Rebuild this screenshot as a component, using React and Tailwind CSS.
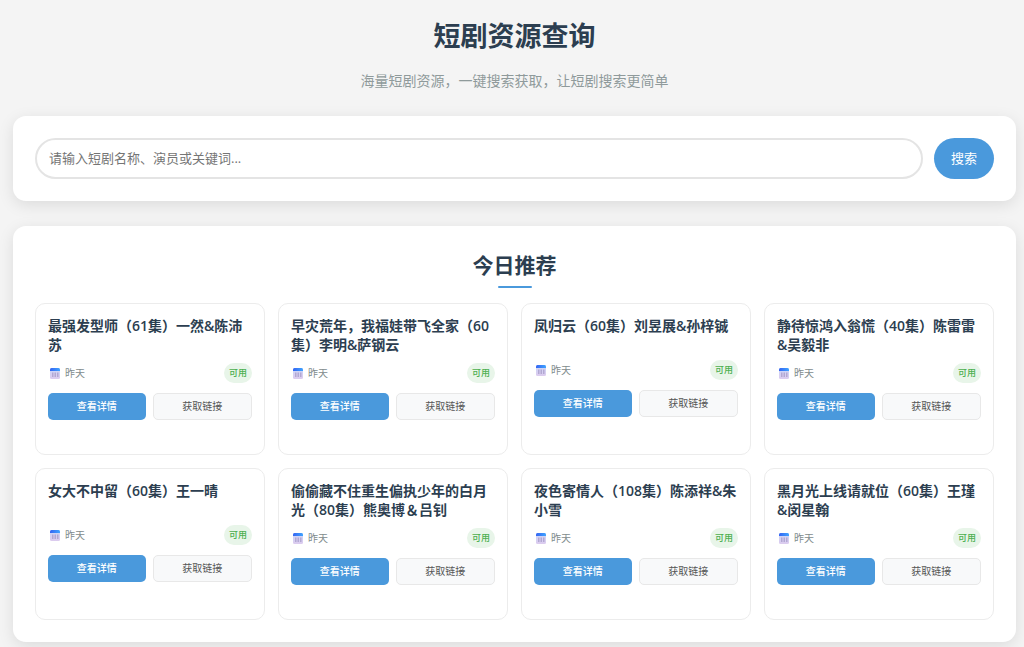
import { useState } from 'react';

const dramas = [
  { id: 1, title: '最强发型师（61集）一然&陈沛苏', date: '昨天', status: '可用' },
  { id: 2, title: '早灾荒年，我福娃带飞全家（60集）李明&萨钢云', date: '昨天', status: '可用' },
  { id: 3, title: '凤归云（60集）刘昱展&孙梓铖', date: '昨天', status: '可用' },
  { id: 4, title: '静待惊鸿入翁慌（40集）陈雷雷&吴毅非', date: '昨天', status: '可用' },
  { id: 5, title: '女大不中留（60集）王一晴', date: '昨天', status: '可用' },
  { id: 6, title: '偷偷藏不住重生偏执少年的白月光（80集）熊奥博＆吕钊', date: '昨天', status: '可用' },
  { id: 7, title: '夜色寄情人（108集）陈添祥&朱小雪', date: '昨天', status: '可用' },
  { id: 8, title: '黑月光上线请就位（60集）王瑾&闵星翰', date: '昨天', status: '可用' },
];

function CalendarIcon() {
  return (
    <svg width="10" height="11" viewBox="0 0 20 22" aria-hidden="true">
      <defs>
        <linearGradient id="calendarTop" x1="0" y1="0" x2="1" y2="0">
          <stop offset="0" stopColor="#3564f2" />
          <stop offset="1" stopColor="#3fa4ff" />
        </linearGradient>
        <linearGradient id="calendarBody" x1="0" y1="0" x2="0" y2="1">
          <stop offset="0" stopColor="#c9d6f8" />
          <stop offset="1" stopColor="#dccbee" />
        </linearGradient>
      </defs>
      <rect x="0" y="0" width="20" height="22" rx="3" fill="url(#calendarBody)" />
      <path d="M3 0h14a3 3 0 0 1 3 3v3H0V3a3 3 0 0 1 3-3z" fill="url(#calendarTop)" />
      <g fill="#b3a8d2">
        <rect x="4" y="9" width="3" height="9" />
        <rect x="9" y="9" width="3" height="9" />
        <rect x="14" y="9" width="3" height="9" />
      </g>
    </svg>
  );
}

function Panel({ className, children }) {
  return (
    <section className={`rounded-[13px] bg-white px-[22px] shadow-[0_4px_16px_rgba(0,0,0,0.1)] ${className}`}>
      {children}
    </section>
  );
}

function DramaCard({ drama }) {
  return (
    <article className="min-h-[152px] rounded-[10px] border border-[#ececec] bg-white p-3">
      <h3 className="min-h-[35px] text-[14px] leading-[19px] font-semibold text-[#2c3e50]">{drama.title}</h3>
      <div className="mt-[9px] flex h-5 items-center justify-between">
        <span className="flex items-center gap-[5px] pl-[2px] text-[10px] text-[#7f8c8d]">
          <CalendarIcon />
          {drama.date}
        </span>
        <span className="flex h-5 items-center rounded-full bg-[#e8f5e9] px-[5px] text-[9px] font-medium text-[#4caf50]">
          {drama.status}
        </span>
      </div>
      <div className="mt-[10px] flex h-[27px] gap-[7px]">
        <button type="button" className="flex-1 rounded-[5px] bg-[#4a99dc] text-[10px] font-medium text-white hover:bg-[#3a86c8]">
          查看详情
        </button>
        <button type="button" className="flex-1 rounded-[5px] border border-[#e8e8e8] bg-[#f8f9fa] text-[10px] text-[#555555] hover:bg-gray-100">
          获取链接
        </button>
      </div>
    </article>
  );
}

function App() {
  const [keyword, setKeyword] = useState('');

  return (
    <main className="min-h-screen bg-[#f4f4f4] pt-4 pr-2 pb-1 pl-[13px] font-['Open_Sans','Noto_Sans_CJK_SC',sans-serif]" lang="zh-CN">
      <header className="text-center">
        <h1 className="text-[27px] leading-10 font-bold text-[#2c3e50]">短剧资源查询</h1>
        <p className="mt-[15px] text-[14px] leading-5 text-[#8f9a9b]">海量短剧资源，一键搜索获取，让短剧搜索更简单</p>
      </header>

      <Panel className="mt-[25px] py-[22px]">
        <form className="flex h-[41px] gap-[11px]" onSubmit={(event) => event.preventDefault()}>
          <input
            type="text"
            aria-label="搜索短剧"
            value={keyword}
            onChange={(event) => setKeyword(event.target.value)}
            placeholder="请输入短剧名称、演员或关键词..."
            className="min-w-0 flex-1 rounded-full border-2 border-[#e4e4e4] bg-white px-3 text-[13px] text-[#333333] outline-none placeholder:text-[#757575] focus:border-[#4a99dc]"
          />
          <button type="submit" className="rounded-full bg-[#4a99dc] px-[17px] text-[13px] text-white hover:bg-[#3a86c8]">
            搜索
          </button>
        </form>
      </Panel>

      <Panel className="mt-[25px] py-[22px]">
        <h2 className="text-center text-[21px] leading-[34px] font-bold text-[#2c3e50]">今日推荐</h2>
        <div className="mx-auto mt-1 h-[2px] w-[34px] rounded-full bg-[#4a99dc]" />
        <div className="mt-[15px] grid grid-cols-2 gap-[13px] md:grid-cols-4">
          {dramas.map((drama) => (
            <DramaCard key={drama.id} drama={drama} />
          ))}
        </div>
      </Panel>
    </main>
  );
}

export default App;
